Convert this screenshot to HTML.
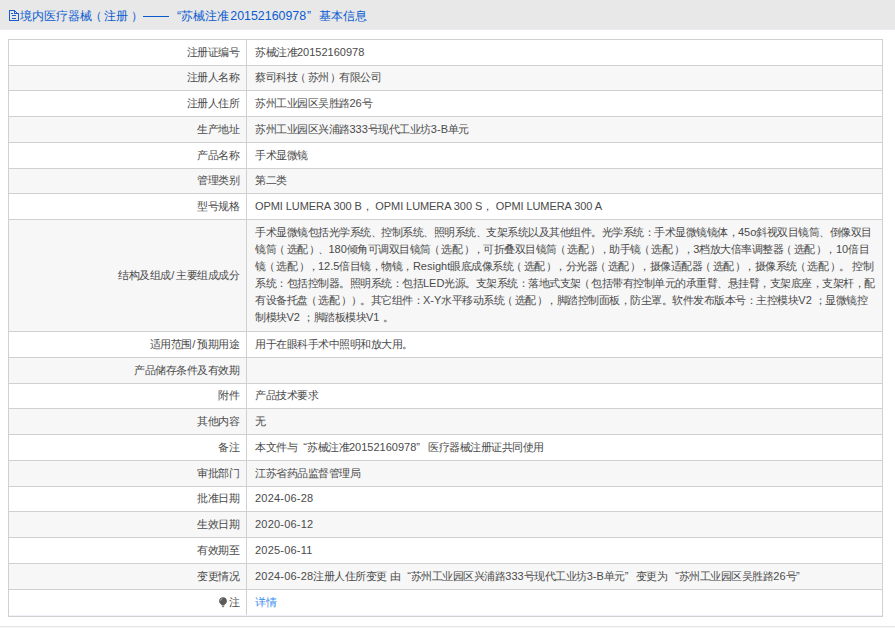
<!DOCTYPE html><html lang="ja"><head><meta charset="utf-8"><style>html,body{text-spacing-trim:space-all;margin:0;padding:0;background:#fff;width:895px;height:628px;overflow:hidden;position:relative;font-family:"Liberation Sans",sans-serif;}
.hdr{position:absolute;left:0;top:0;width:895px;height:29px;background:#e8e8e8;}
.doc{position:absolute;left:9px;top:10px;}
.ht{position:absolute;top:7px;font-size:12px;line-height:18px;color:#0b5bd0;white-space:nowrap;}
.hd{font-size:12.4px;margin-left:1.3px;}
.hlq{display:inline-block;width:12px;text-align:right;}
.hrq{display:inline-block;width:12px;text-align:left;padding-left:1px;}
.dash{position:absolute;left:143px;top:16px;width:26px;height:1px;background:#0b5bd0;}
.hline{position:absolute;left:0;top:29px;width:895px;height:1px;background:#e9ecf5;}
.row{position:absolute;left:8px;width:875px;}
.row.w{background:#fff}
.row.g{background:#f7f7f7}
.lab{position:absolute;left:0;width:231px;text-align:right;font-size:11px;color:#4a4a4a;white-space:nowrap;top:0;}
.val{position:absolute;left:247px;top:0;font-size:11px;color:#4a4a4a;white-space:nowrap;}
.c{letter-spacing:-0.5px;}
.lq{display:inline-block;width:10.5px;text-align:right;}
.rq{display:inline-block;width:10.5px;text-align:left;}
.multi{top:5px;}
.ml{height:17px;line-height:17px;}
.link{color:#3b8ef0}
.frame{position:absolute;left:8px;top:39px;width:873px;height:576px;border:1px solid #d0d0d0;}
.divider{position:absolute;left:246px;top:39px;width:1px;height:577px;background:#d0d0d0;}
.hl{position:absolute;left:8px;width:875px;height:1px;background:#d0d0d0;}
.btm{position:absolute;left:0;top:626px;width:895px;height:1px;background:#e6e6e6;}
.btm2{position:absolute;left:0;top:627px;width:895px;height:1px;background:#f5f5f5;}
.lastin{position:absolute;left:9px;top:615px;width:873px;height:1px;background:#eef1f8;}
.bulb{position:absolute;left:211px;top:8px;}
.dt{letter-spacing:0.2px;}
.lp{position:relative;left:-2px;}
.rp{position:relative;left:1.5px;}
.hlp{position:relative;left:-2.5px;}
.hrp{position:relative;left:2.5px;}
.sl{margin:0 1.6px 0 0.4px;}
</style></head><body>
<div class="hdr"><svg class="doc" width="12" height="13" viewBox="0 0 12 13" shape-rendering="crispEdges"><g fill="#1a5dcc"><rect x="0" y="0" width="6" height="1"/><rect x="0" y="0" width="1" height="11"/><rect x="0" y="10" width="10" height="1"/><rect x="9" y="3" width="1" height="8"/><rect x="6" y="1" width="1" height="1"/><rect x="7" y="2" width="1" height="1"/><rect x="8" y="3" width="1" height="1"/><rect x="5" y="1" width="1" height="2"/><rect x="5" y="3" width="4" height="1"/><rect x="2" y="3" width="2" height="1"/><rect x="3" y="5" width="4" height="1"/><rect x="3" y="8" width="4" height="1"/></g></svg><span class="ht" style="left:20px">境内医疗器械<span class="hlp">（</span>注册<span class="hrp">）</span></span><div class="dash"></div><span class="ht" style="left:169px"><span class="hlq">“</span>苏械注准<span class="hd">20152160978</span><span class="hrq">”</span></span><span class="ht" style="left:319px">基本信息</span></div>
<div class="hline"></div>
<div class="row w" style="top:39px;height:26px">
<div class="lab" style="line-height:26px"><span class="c">注册证编号</span></div>
<div class="val" style="line-height:26px"><span class="c">苏械注准</span>20152160978</div>
</div>
<div class="row g" style="top:65px;height:25px">
<div class="lab" style="line-height:25px"><span class="c">注册人名称</span></div>
<div class="val" style="line-height:25px"><span class="c">蔡司科技<span class="lp">（</span>苏州<span class="rp">）</span>有限公司</span></div>
</div>
<div class="row w" style="top:90px;height:26px">
<div class="lab" style="line-height:26px"><span class="c">注册人住所</span></div>
<div class="val" style="line-height:26px"><span class="c">苏州工业园区吴胜路</span>26<span class="c">号</span></div>
</div>
<div class="row g" style="top:116px;height:26px">
<div class="lab" style="line-height:26px"><span class="c">生产地址</span></div>
<div class="val" style="line-height:26px"><span class="c">苏州工业园区兴浦路</span>333<span class="c">号现代工业坊</span>3-B<span class="c">单元</span></div>
</div>
<div class="row w" style="top:142px;height:26px">
<div class="lab" style="line-height:26px"><span class="c">产品名称</span></div>
<div class="val" style="line-height:26px"><span class="c">手术显微镜</span></div>
</div>
<div class="row g" style="top:168px;height:25px">
<div class="lab" style="line-height:25px"><span class="c">管理类别</span></div>
<div class="val" style="line-height:25px"><span class="c">第二类</span></div>
</div>
<div class="row w" style="top:193px;height:26px">
<div class="lab" style="line-height:26px"><span class="c">型号规格</span></div>
<div class="val" style="line-height:26px;letter-spacing:-0.08px">OPMI LUMERA 300 B<span class="c">，</span> OPMI LUMERA 300 S<span class="c">，</span> OPMI LUMERA 300 A</div>
</div>
<div class="row g" style="top:219px;height:112px">
<div class="lab" style="line-height:112px"><span class="c">结构及组成</span><span class="sl">/</span><span class="c">主要组成成分</span></div>
<div class="val multi"><div class="ml"><span class="c">手术显微镜包括光学系统、控制系统、照明系统、支架系统以及其他组件。光学系统：手术显微镜镜体，</span>45o<span class="c">斜视双目镜筒、倒像双目</span></div><div class="ml"><span class="c">镜筒<span class="lp">（</span>选配<span class="rp">）</span>、</span>180<span class="c">倾角可调双目镜筒<span class="lp">（</span>选配<span class="rp">）</span>，可折叠双目镜筒<span class="lp">（</span>选配<span class="rp">）</span>，助手镜<span class="lp">（</span>选配<span class="rp">）</span>，</span>3<span class="c">档放大倍率调整器<span class="lp">（</span>选配<span class="rp">）</span>，</span>10<span class="c">倍目</span></div><div class="ml"><span class="c">镜<span class="lp">（</span>选配<span class="rp">）</span>，</span>12.5<span class="c">倍目镜，物镜，</span>Resight<span class="c">眼底成像系统<span class="lp">（</span>选配<span class="rp">）</span>，分光器<span class="lp">（</span>选配<span class="rp">）</span>，摄像适配器<span class="lp">（</span>选配<span class="rp">）</span>，摄像系统<span class="lp">（</span>选配<span class="rp">）</span>。</span> <span class="c">控制</span></div><div class="ml"><span class="c">系统：包括控制器。照明系统：包括</span>LED<span class="c">光源。支架系统：落地式支架<span class="lp">（</span>包括带有控制单元的承重臂、悬挂臂，支架底座，支架杆，配</span></div><div class="ml"><span class="c">有设备托盘<span class="lp">（</span>选配<span class="rp">）</span><span class="rp">）</span>。其它组件：</span>X-Y<span class="c">水平移动系统<span class="lp">（</span>选配<span class="rp">）</span>，脚踏控制面板，防尘罩。软件发布版本号：主控模块</span>V2 <span class="c">；显微镜控</span></div><div class="ml"><span class="c">制模块</span>V2 <span class="c">；脚踏板模块</span>V1 <span class="c">。</span></div></div>
</div>
<div class="row w" style="top:331px;height:26px">
<div class="lab" style="line-height:26px"><span class="c">适用范围</span><span class="sl">/</span><span class="c">预期用途</span></div>
<div class="val" style="line-height:26px"><span class="c">用于在眼科手术中照明和放大用。</span></div>
</div>
<div class="row g" style="top:357px;height:26px">
<div class="lab" style="line-height:26px"><span class="c">产品储存条件及有效期</span></div>
<div class="val" style="line-height:26px"></div>
</div>
<div class="row w" style="top:383px;height:25px">
<div class="lab" style="line-height:25px"><span class="c">附件</span></div>
<div class="val" style="line-height:25px"><span class="c">产品技术要求</span></div>
</div>
<div class="row g" style="top:408px;height:26px">
<div class="lab" style="line-height:26px"><span class="c">其他内容</span></div>
<div class="val" style="line-height:26px"><span class="c">无</span></div>
</div>
<div class="row w" style="top:434px;height:26px">
<div class="lab" style="line-height:26px"><span class="c">备注</span></div>
<div class="val" style="line-height:26px"><span class="c">本文件与</span><span class="lq" style="width:10px">“</span><span class="c">苏械注准</span>20152160978<span class="rq" style="width:11.8px">”</span><span class="c">医疗器械注册证共同使用</span></div>
</div>
<div class="row g" style="top:460px;height:26px">
<div class="lab" style="line-height:26px"><span class="c">审批部门</span></div>
<div class="val" style="line-height:26px"><span class="c">江苏省药品监督管理局</span></div>
</div>
<div class="row w" style="top:486px;height:25px">
<div class="lab" style="line-height:25px"><span class="c">批准日期</span></div>
<div class="val" style="line-height:25px"><span class="dt">2024-06-28</span></div>
</div>
<div class="row g" style="top:511px;height:26px">
<div class="lab" style="line-height:26px"><span class="c">生效日期</span></div>
<div class="val" style="line-height:26px"><span class="dt">2020-06-12</span></div>
</div>
<div class="row w" style="top:537px;height:26px">
<div class="lab" style="line-height:26px"><span class="c">有效期至</span></div>
<div class="val" style="line-height:26px"><span class="dt">2025-06-11</span></div>
</div>
<div class="row g" style="top:563px;height:26px">
<div class="lab" style="line-height:26px"><span class="c">变更情况</span></div>
<div class="val" style="line-height:26px"><span class="dt">2024-06-28</span><span class="c">注册人住所变更</span> <span class="c">由</span><span class="lq" style="width:10.5px">“</span><span class="c">苏州工业园区兴浦路</span>333<span class="c">号现代工业坊</span>3-B<span class="c">单元</span><span class="rq" style="width:11px">”</span><span class="c">变更为</span><span class="lq" style="width:11.5px">“</span><span class="c">苏州工业园区吴胜路</span>26<span class="c">号</span><span class="rq" style="width:10.5px">”</span></div>
</div>
<div class="row w" style="top:589px;height:27px">
<div class="lab" style="line-height:27px"><svg class="bulb" width="9" height="11" viewBox="0 0 9 11"><path d="M4 0.3 C6.2 0.3 7.9 2 7.9 4.1 C7.9 5.7 7 6.6 6 7.3 L5.2 8.4 L2.8 8.4 L2 7.3 C1 6.6 0.1 5.7 0.1 4.1 C0.1 2 1.8 0.3 4 0.3Z" fill="#5a5a5a"/><rect x="2.9" y="8.8" width="2.2" height="1.4" fill="#8f8090"/><path d="M1.6 3.6 Q1.8 1.9 3.4 1.4" stroke="#a9bcd8" stroke-width="1" fill="none"/></svg><span class="c">注</span></div>
<div class="val link" style="line-height:27px"><span class="c">详情</span></div>
</div>
<div class="frame"></div><div class="divider"></div>
<div class="hl" style="top:39px"></div>
<div class="hl" style="top:65px"></div>
<div class="hl" style="top:90px"></div>
<div class="hl" style="top:116px"></div>
<div class="hl" style="top:142px"></div>
<div class="hl" style="top:168px"></div>
<div class="hl" style="top:193px"></div>
<div class="hl" style="top:219px"></div>
<div class="hl" style="top:331px"></div>
<div class="hl" style="top:357px"></div>
<div class="hl" style="top:383px"></div>
<div class="hl" style="top:408px"></div>
<div class="hl" style="top:434px"></div>
<div class="hl" style="top:460px"></div>
<div class="hl" style="top:486px"></div>
<div class="hl" style="top:511px"></div>
<div class="hl" style="top:537px"></div>
<div class="hl" style="top:563px"></div>
<div class="hl" style="top:589px"></div>
<div class="hl" style="top:616px"></div>
<div class="lastin"></div><div class="btm"></div><div class="btm2"></div>
</body></html>
